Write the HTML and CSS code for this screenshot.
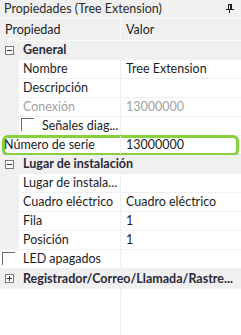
FILE: index.html
```html
<!DOCTYPE html>
<html lang="es">
<head>
<meta charset="utf-8">
<title>Propiedades</title>
<link rel="stylesheet" href="styles.css">
</head>
<body>
<div class="panel">
  <div class="titlebar">
    <span class="title">Propiedades (Tree Extension)</span>
    <svg class="pin" width="8" height="9" viewBox="0 0 8 9" aria-hidden="true">
      <rect x="2" y="0" width="4" height="1" fill="#1e1e1e"/>
      <rect x="2" y="0" width="1" height="6" fill="#1e1e1e"/>
      <rect x="4" y="0" width="2" height="6" fill="#1e1e1e"/>
      <rect x="0" y="5" width="8" height="1" fill="#1e1e1e"/>
      <rect x="3" y="6" width="1" height="3" fill="#1e1e1e"/>
    </svg>
  </div>
  <div class="header">
    <div class="hname">Propiedad</div>
    <div class="hval">Valor</div>
  </div>
  <div class="grid">
    <div class="row cat">
      <div class="indent"><span class="toggle minus"></span></div>
      <div class="cat-label">General</div>
    </div>
    <div class="row">
      <div class="indent"></div>
      <div class="name">Nombre</div>
      <div class="val">Tree Extension</div>
    </div>
    <div class="row">
      <div class="indent"></div>
      <div class="name">Descripción</div>
      <div class="val"></div>
    </div>
    <div class="row disabled">
      <div class="indent"></div>
      <div class="name">Conexión</div>
      <div class="val">13000000</div>
    </div>
    <div class="row">
      <div class="indent"></div>
      <div class="name check-name"><span class="checkbox"></span><span class="ellip">Señales diag...</span></div>
      <div class="val"></div>
    </div>
    <div class="row highlight">
      <div class="name wide">Número de serie</div>
      <div class="val">13000000</div>
    </div>
    <div class="row cat">
      <div class="indent"><span class="toggle minus"></span></div>
      <div class="cat-label">Lugar de instalación</div>
    </div>
    <div class="row">
      <div class="indent"></div>
      <div class="name">Lugar de instala...</div>
      <div class="val"></div>
    </div>
    <div class="row">
      <div class="indent"></div>
      <div class="name">Cuadro eléctrico</div>
      <div class="val">Cuadro eléctrico</div>
    </div>
    <div class="row">
      <div class="indent"></div>
      <div class="name">Fila</div>
      <div class="val">1</div>
    </div>
    <div class="row">
      <div class="indent"></div>
      <div class="name">Posición</div>
      <div class="val">1</div>
    </div>
    <div class="row white">
      <div class="indent"><span class="checkbox"></span></div>
      <div class="name">LED apagados</div>
      <div class="val"></div>
    </div>
    <div class="row cat last">
      <div class="indent"><span class="toggle plus"></span></div>
      <div class="cat-label">Registrador/Correo/Llamada/Rastre...</div>
    </div>
  </div>
  <div class="empty"><div class="empty-col"></div></div>
</div>
</body>
</html>
```
FILE: styles.css
```css
* { box-sizing: border-box; }
html, body { margin: 0; padding: 0; height: 100%; }
body {
  font-family: Lato, "Noto Sans", sans-serif;
  font-size: 12.5px;
  color: #1e1e1e;
  background: #ffffff;
}
.panel {
  display: flex;
  flex-direction: column;
  height: 100%;
  width: 241px;
}
.titlebar {
  height: 19px;
  background: #f0f0f0;
  border-bottom: 1px solid #fafafa;
  display: flex;
  align-items: center;
  justify-content: space-between;
  padding: 0 7px 0 4px;
  line-height: 18px;
  color: #2b2b2b;
}
.pin { display: block; margin-top: -2px; }
.header {
  height: 22px;
  background: #f0f0f0;
  border-bottom: 1px solid #fafafa;
  display: grid;
  grid-template-columns: 121px 1fr;
  line-height: 21px;
}
.hname { padding-left: 5px; border-right: 1px solid #fafafa; }
.hval { padding-left: 5px; }
.grid { display: flex; flex-direction: column; }
.row {
  display: grid;
  grid-template-columns: 19px 102px 1fr;
  height: 19px;
  line-height: 18px;
  border-bottom: 1px solid #f0f0f0;
  background: #ffffff;
  position: relative;
}
.indent { background: #f0f0f0; position: relative; }
.name {
  padding-left: 4px;
  border-right: 1px solid #f0f0f0;
  white-space: nowrap;
  overflow: hidden;
}
.val {
  padding-left: 5px;
  white-space: nowrap;
  overflow: hidden;
}
.disabled .name, .disabled .val { color: #a2a2a2; }
.cat {
  background: #f0f0f0;
  grid-template-columns: 19px 1fr;
  border-bottom-color: #f0f0f0;
}
.cat-label {
  padding-left: 4px;
  font-weight: bold;
  color: #2a2a3a;
  white-space: nowrap;
  overflow: hidden;
}
.toggle {
  position: absolute;
  left: 5px;
  top: 5px;
  width: 9px;
  height: 9px;
  border: 1px solid #7a7a7a;
  background: #ffffff;
}
.toggle::before {
  content: "";
  position: absolute;
  left: 1px;
  top: 3px;
  width: 5px;
  height: 1px;
  background: #333333;
}
.plus::after {
  content: "";
  position: absolute;
  left: 3px;
  top: 1px;
  width: 1px;
  height: 5px;
  background: #333333;
}
.checkbox {
  display: inline-block;
  width: 13px;
  height: 13px;
  border-top: 1px solid #6a6a6a;
  border-left: 1px solid #6a6a6a;
  vertical-align: top;
}
.check-name { padding-left: 2px; display: flex; align-items: flex-start; gap: 8px; }
.check-name .checkbox { margin-top: 1px; }
.ellip { line-height: 18px; }
.white .indent { background: #ffffff; }
.white .indent .checkbox { position: absolute; left: 2px; top: 2px; }
.highlight { grid-template-columns: 121px 1fr; }
.highlight::before {
  content: "";
  position: absolute;
  left: 2px;
  right: 2px;
  top: -1px;
  bottom: -2px;
  border: 3px solid #86d03e;
  border-radius: 6px;
  box-shadow: 0 1px 2px rgba(0, 0, 0, 0.25);
  pointer-events: none;
}
.highlight .name, .highlight .val { position: relative; z-index: 1; }
.highlight .name.wide { padding-left: 4px; }
.last { height: 20px; line-height: 19px; border-bottom: none; }
.empty { flex: 1; }
.empty-col { width: 121px; height: 100%; border-right: 1px solid #f0f0f0; }
```
